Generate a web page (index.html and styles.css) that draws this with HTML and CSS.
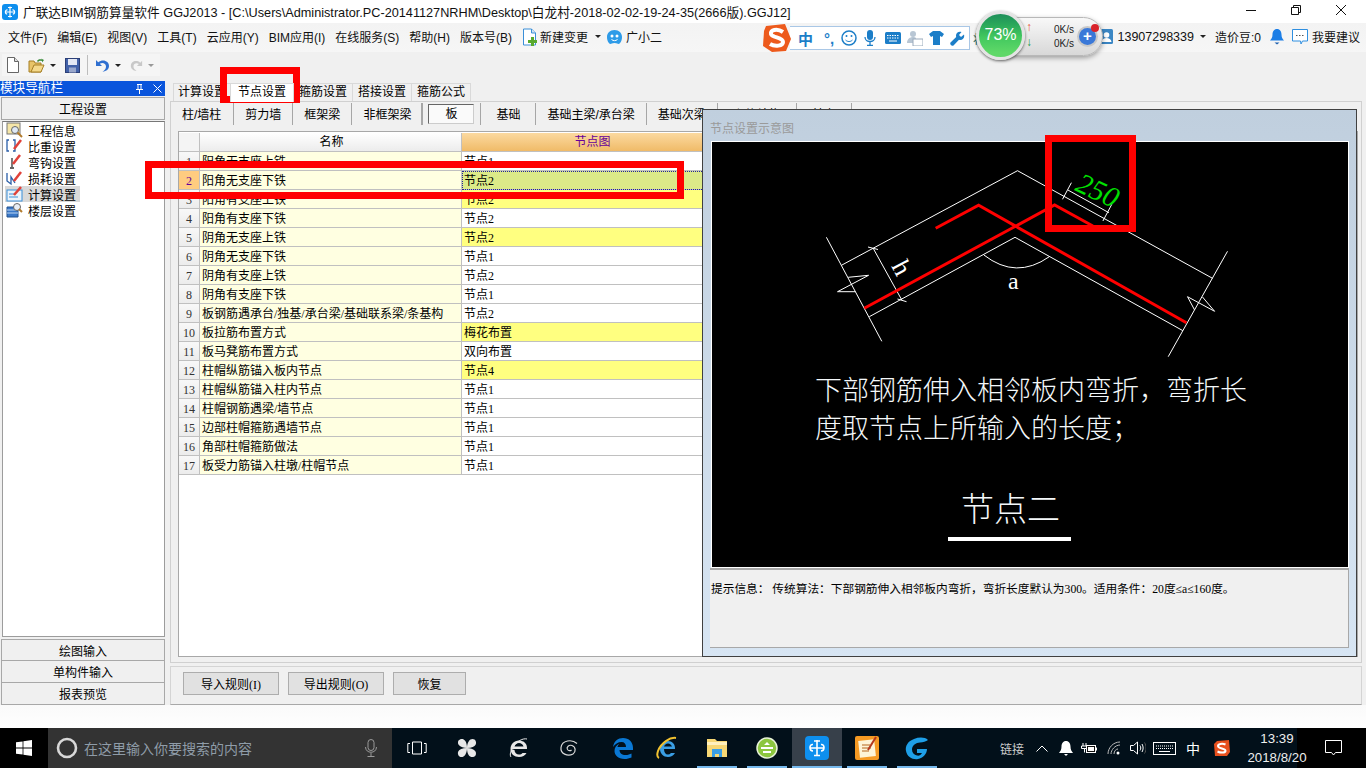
FILE: index.html
```html
<!DOCTYPE html>
<html lang="zh-CN">
<head>
<meta charset="utf-8">
<title>广联达BIM钢筋算量软件 GGJ2013</title>
<link rel="stylesheet" href="styles.css">
</head>
<body>
<div class="app">
  <header class="titlebar">
    <svg class="appicon" width="16" height="16" viewBox="0 0 16 16"><rect width="16" height="16" rx="3" fill="#0e8fee"/><path d="M8 2.500v11M3 8h10M5.500 5.800C3 5.500 2.500 10 5.200 10M10.500 5.800c2.500-.3 3 4.200.3 4.200M6 3.500h4M6 12.500h4" stroke="#fff" stroke-width="1.200" fill="none"/></svg>
    <span class="titletext">广联达BIM钢筋算量软件 GGJ2013 - [C:\Users\Administrator.PC-20141127NRHM\Desktop\白龙村-2018-02-02-19-24-35(2666版).GGJ12]</span>
    <div class="winctl">
      <svg width="10" height="10" viewBox="0 0 10 10"><path d="M0 5.500h10" stroke="#111"/></svg>
      <svg width="10" height="10" viewBox="0 0 10 10"><path d="M.5 2.500h7v7h-7zM2.500 2.500v-2h7v7h-2" stroke="#111" fill="none"/></svg>
      <svg width="10" height="10" viewBox="0 0 10 10"><path d="M0 0l10 10M10 0L0 10" stroke="#111"/></svg>
    </div>
  </header>

  <nav class="menubar">
    <span>文件(F)</span><span>编辑(E)</span><span>视图(V)</span><span>工具(T)</span><span>云应用(Y)</span><span>BIM应用(I)</span><span>在线服务(S)</span><span>帮助(H)</span><span>版本号(B)</span>
    <span class="menuicon">
      <svg width="15" height="18" viewBox="0 0 15 18"><path d="M1.500 1h8l4 4v12h-12z" fill="#fff" stroke="#3a8fd8"/><path d="M9.500 1v4h4" fill="#cfe4f7" stroke="#3a8fd8"/><path d="M9 9v3H6v3h3v3h3v-3h3v-3h-3V9z" fill="#58a92e"/></svg>
      新建变更<i class="caret dark"></i>
    </span>
    <span class="menuicon">
      <svg width="17" height="16" viewBox="0 0 17 16"><path d="M8.500 1C13 1 16 4 16 8c0 4-2 7-3.500 7-1 0-1.500-1-4-1s-3 1-4 1C3 15 1 12 1 8c0-4 3-7 7.500-7z" fill="#2e9be8"/><circle cx="6" cy="7" r="1.500" fill="#fff"/><circle cx="11" cy="7" r="1.500" fill="#fff"/><path d="M5.500 10.500c2 1.500 4 1.500 6 0" stroke="#fff" fill="none"/></svg>
      广小二
    </span>
    <div class="userbar">
      <svg class="usericon" width="13" height="15" viewBox="0 0 13 15"><rect width="13" height="15" rx="1.500" fill="#3a86c4"/><circle cx="6.500" cy="6" r="2.800" fill="#fff"/><path d="M1.500 13c.5-3 2.500-4 5-4s4.500 1 5 4z" fill="#fff"/></svg>
      <span class="phone">13907298339</span><i class="caret dark"></i>
      <span class="beans">造价豆:0</span>
      <svg class="bell" width="14" height="17" viewBox="0 0 14 17"><path d="M7 1c3 0 4.500 2.500 4.500 5.500 0 3 1 4.500 2.500 6H0c1.500-1.500 2.500-3 2.500-6C2.500 3.500 4 1 7 1z" fill="#1c7ee6"/><path d="M4.500 14.500h5L7 16.500z" fill="#1c5fae"/></svg>
      <svg class="chat" width="16" height="16" viewBox="0 0 16 16"><path d="M.5.500h15v11.500h-5l-1.500 3-.5-3H.5z" fill="#fff" stroke="#2f8fe0"/><path d="M4 6.500h1.500M7 6.500h1.500M10 6.500h1.500" stroke="#555"/></svg>
      <span>我要建议</span>
    </div>
  </nav>

  <div class="toolbar">
    <div class="toolgroup">
      <svg width="12" height="16" viewBox="0 0 12 16"><path d="M.5.500h7l4 4v11H.5z" fill="#fff" stroke="#666"/><path d="M7.500.500v4h4" fill="#ddd" stroke="#666"/></svg>
      <svg class="gapl" width="17" height="15" viewBox="0 0 17 15"><path d="M1 3h5l1 2h6v9H1z" fill="#e8c468" stroke="#a57e24"/><path d="M3 14l3-7h10l-3 7z" fill="#f4d98c" stroke="#a57e24"/><path d="M9 3c1-2 3-2 5-1.500L13 .500l3 1.500-2 2.500v-1.500c-2-.5-3 0-4 1z" fill="#3a8a3a"/></svg>
      <i class="caret dark tcaret"></i>
      <svg class="gapl" width="15" height="15" viewBox="0 0 15 15"><rect x=".5" y=".5" width="14" height="14" fill="#4261a8" stroke="#2c3f77"/><rect x="3" y="1" width="9" height="6" fill="#e4e8f4"/><rect x="4" y="9.500" width="7" height="5" fill="#9aa8cc"/></svg>
      <b class="toolsep"></b>
      <svg width="15" height="15" viewBox="0 0 15 15"><path d="M1 2v6h6L4.800 5.800C7.500 4 11 5.500 11 8.500c0 2.500-1.500 4-3.500 5C11.500 13.500 14 11 14 8c0-5-6-7.500-10.800-3.800z" fill="#2f6fd0"/></svg>
      <i class="caret dark tcaret"></i>
      <svg class="gapl" width="13" height="15" viewBox="0 0 15 15"><path d="M14 2v6H8l2.200-2.200C7.500 4 4 5.500 4 8.500c0 2.500 1.500 4 3.500 5C3.500 13.500 1 11 1 8c0-5 6-7.500 10.800-3.800z" fill="#c8c8c8"/></svg>
      <i class="caret grey tcaret"></i>
    </div>
  </div>

  <main class="workspace">
    <aside class="navpane">
      <div class="navtitle"><span>模块导航栏</span>
        <svg width="9" height="10" viewBox="0 0 9 10"><path d="M2 .5h5M3 .5v5M6 .5v5M1 5.500h7M4.500 5.500V10" stroke="#fff" fill="none"/></svg>
        <svg class="navclose" width="9" height="9" viewBox="0 0 9 9"><path d="M.5.500l8 8M8.500.500l-8 8" stroke="#fff"/></svg>
      </div>
      <div class="navbtn">工程设置</div>
      <ul class="tree">
        <li><svg width="17" height="16" viewBox="0 0 17 16"><rect x="1" y="1" width="13" height="11" fill="#f5e6a8" stroke="#777"/><circle cx="9" cy="8" r="3.500" fill="#dfe9f5" stroke="#666"/><path d="M11.500 10.500L16 15" stroke="#b27b2e" stroke-width="2"/></svg>工程信息</li>
        <li><svg width="17" height="16" viewBox="0 0 17 16"><path d="M3 2H1v11h2M7 2h2v11H7" stroke="#2a5ea8" fill="none" stroke-width="1.300"/><path d="M8 11l7-9" stroke="#e0413a" stroke-width="2.500"/></svg>比重设置</li>
        <li><svg width="17" height="16" viewBox="0 0 17 16"><path d="M6 4v9M4 14h4" stroke="#333" fill="none" stroke-width="1.300"/><path d="M7 10l7-9" stroke="#e0413a" stroke-width="2.500"/></svg>弯钩设置</li>
        <li><svg width="17" height="16" viewBox="0 0 17 16"><path d="M1 3v8l4 3V7l4 6" stroke="#2a5ea8" fill="none" stroke-width="1.300"/><path d="M8 11l7-9" stroke="#e0413a" stroke-width="2.500"/></svg>损耗设置</li>
        <li class="selected"><svg width="17" height="16" viewBox="0 0 17 16"><rect x="1" y="4" width="15" height="11" fill="#eaf3fb" stroke="#3a8fd8"/><path d="M3 8h6M3 11h9" stroke="#3a8fd8"/><path d="M8 9l7-8" stroke="#e0413a" stroke-width="2.500"/></svg>计算设置</li>
        <li><svg width="17" height="16" viewBox="0 0 17 16"><path d="M1 5h11v10H1z" fill="#3a78c8" stroke="#23528f"/><path d="M1 8h11M1 11h11" stroke="#bcd6f2"/><circle cx="11" cy="5" r="3.500" fill="#e8eef5" stroke="#666"/><path d="M13 7l3 3" stroke="#b27b2e" stroke-width="2"/></svg>楼层设置</li>
      </ul>
      <div class="navbtn small first">绘图输入</div>
      <div class="navbtn small">单构件输入</div>
      <div class="navbtn small">报表预览</div>
    </aside>

    <section class="content">
      <div class="tabs">
        <span class="tab lead">计算设置</span><span class="tab active">节点设置</span><span class="tab">箍筋设置</span><span class="tab">搭接设置</span><span class="tab">箍筋公式</span>
      </div>
      <div class="frame">
        <div class="subtabs">
          <span class="sub lead">柱/墙柱</span><span class="sub">剪力墙</span><span class="sub">框架梁</span><span class="sub">非框架梁</span>
          <span class="sub subbox"><b>板</b></span>
          <span class="sub wide">基础</span><span class="sub">基础主梁/承台梁</span><span class="sub">基础次梁</span><span class="sub wide">砌体结构</span><span class="sub wide">其它</span>
        </div>
        <div class="grid">
          <div class="row head"><span class="num"></span><span class="name">名称</span><span class="val">节点图</span></div>
          <div class="row"><span class="num">1</span><span class="name">阳角无支座上铁</span><span class="val">节点1</span></div>
          <div class="row current"><span class="num">2</span><span class="name">阳角无支座下铁</span><span class="val">节点2</span></div>
          <div class="row"><span class="num">3</span><span class="name">阳角有支座上铁</span><span class="val mark">节点2</span></div>
          <div class="row"><span class="num">4</span><span class="name">阳角有支座下铁</span><span class="val">节点2</span></div>
          <div class="row"><span class="num">5</span><span class="name">阴角无支座上铁</span><span class="val mark">节点2</span></div>
          <div class="row"><span class="num">6</span><span class="name">阴角无支座下铁</span><span class="val">节点1</span></div>
          <div class="row"><span class="num">7</span><span class="name">阴角有支座上铁</span><span class="val">节点2</span></div>
          <div class="row"><span class="num">8</span><span class="name">阴角有支座下铁</span><span class="val">节点1</span></div>
          <div class="row"><span class="num">9</span><span class="name">板钢筋遇承台/独基/承台梁/基础联系梁/条基构</span><span class="val">节点2</span></div>
          <div class="row"><span class="num">10</span><span class="name">板拉筋布置方式</span><span class="val mark">梅花布置</span></div>
          <div class="row"><span class="num">11</span><span class="name">板马凳筋布置方式</span><span class="val">双向布置</span></div>
          <div class="row"><span class="num">12</span><span class="name">柱帽纵筋锚入板内节点</span><span class="val mark">节点4</span></div>
          <div class="row"><span class="num">13</span><span class="name">柱帽纵筋锚入柱内节点</span><span class="val">节点1</span></div>
          <div class="row"><span class="num">14</span><span class="name">柱帽钢筋遇梁/墙节点</span><span class="val">节点1</span></div>
          <div class="row"><span class="num">15</span><span class="name">边部柱帽箍筋遇墙节点</span><span class="val">节点1</span></div>
          <div class="row"><span class="num">16</span><span class="name">角部柱帽箍筋做法</span><span class="val">节点1</span></div>
          <div class="row"><span class="num">17</span><span class="name">板受力筋锚入柱墩/柱帽节点</span><span class="val">节点1</span></div>
        </div>
      </div>
      <div class="actions">
        <button class="btn">导入规则(I)</button><button class="btn">导出规则(O)</button><button class="btn short">恢复</button>
      </div>
    </section>
  </main>

  <div class="strip"></div>

  <footer class="taskbar">
    <div class="start"><svg width="16" height="16" viewBox="0 0 16 16"><path d="M0 2.300l6.600-.9v6.200H0zM7.400 1.300L16 0v7.600H7.400zM0 8.400h6.600v6.200L0 13.700zM7.400 8.400H16V16l-8.600-1.300z" fill="#fff"/></svg></div>
    <div class="search">
      <svg width="22" height="22" viewBox="0 0 22 22"><circle cx="11" cy="11" r="9" fill="none" stroke="#d8d8d8" stroke-width="2.600"/></svg>
      <span>在这里输入你要搜索的内容</span>
      <svg class="mic" width="12" height="18" viewBox="0 0 12 18"><rect x="3" y=".5" width="6" height="11" rx="3" fill="none" stroke="#9a9a9a"/><path d="M.5 8c0 7 11 7 11 0M6 14v3M2.500 17.500h7" stroke="#9a9a9a" fill="none"/></svg>
    </div>
    <div class="cell"><svg width="20" height="14" viewBox="0 0 20 14"><path d="M5.500 1h9v12h-9zM3 2.500H.8v9H3M17 2.500h2.200v9H17" stroke="#fff" fill="none"/></svg></div>
    <div class="cell"><svg width="22" height="22" viewBox="0 0 22 22"><path d="M11 11C4 11 .5 7 2.500 3.500 5 .5 11 1 11 11zM11 11c0-7 4-10.500 7.500-8.500 3 2.500 2.500 8.500-7.500 8.500zM11 11c7 0 10.500 4 8.500 7.500-2.500 3-8.500 2.500-8.500-7.500zM11 11c0 7-4 10.500-7.500 8.500-3-2.500-2.500-8.500 7.500-8.500z" fill="#e8e8e8"/></svg></div>
    <div class="cell nudge"><svg width="22" height="22" viewBox="0 0 22 22"><path d="M3 12h16c.5-5-3-8.500-8-8.500S2.500 7.500 2.500 12c0 5 4 8 8.500 8 3.500 0 6-1.500 7.500-4h-4c-1 1-2 1.500-3.500 1.500-2.500 0-4.500-2-4.500-4.500zM6.500 9.500c.5-2 2.500-3.500 4.500-3.500s4 1.500 4.500 3.500z" fill="#e8e8e8"/><path d="M19 2c-4-1-10 2-14 8-2.500 4-3.500 8-2 10" stroke="#e8e8e8" fill="none"/></svg></div>
    <div class="cell nudge"><svg width="20" height="20" viewBox="0 0 20 20"><path d="M18 5.500C13 1 3 2 2 9.500c-.8 6 6.500 9.500 12 6.500 3-2 3-7-1-8.500-3-1-6 1.500-4.500 4 1 1.500 3 1.500 4 .5" stroke="#d8d8d8" fill="none" stroke-width="1.200"/></svg></div>
    <div class="cell far"><svg width="22" height="22" viewBox="0 0 22 22"><path d="M1 10C2 4 6 1 11 1c6 0 10 4 10 10v2H7.500c0 3 2.500 5 6 5 2.500 0 4.500-.7 6-1.500v4c-2 .8-4.500 1.500-7 1.500C6 22 2.500 18 2.500 14c0-3 1.500-6 5-7.500-1 1-1.800 2.200-2 3.500h8.500c0-3-1.500-5-4.500-5C6 5 3 7 1 10z" fill="#0a78d4"/></svg></div>
    <div class="cell"><svg width="24" height="24" viewBox="0 0 24 24"><path d="M6 13h14c.5-5-3-8-7-8s-8 3.500-8 8 3.500 8 8 8c3 0 5.500-1.500 7-4h-4c-1 1-2 1.500-3 1.500-2.500 0-4-2-4-5.500zM9 10.500c.5-1.500 2-3 4-3s3.500 1.500 4 3z" fill="#3a9ee4"/><path d="M21 2C15 1 6 7 3 15c-1 3-1 6 1 7" stroke="#f2c230" fill="none" stroke-width="2"/></svg></div>
    <div class="cell open"><svg width="22" height="20" viewBox="0 0 22 20"><path d="M1 1h8l2 2h10v16H1z" fill="#f7d774"/><rect x="1" y="4" width="20" height="3" fill="#fff0bd"/><path d="M6 11h10v8h-3v-3H9v3H6z" fill="#3a9ee4"/></svg></div>
    <div class="cell open"><svg width="22" height="22" viewBox="0 0 22 22"><circle cx="11" cy="11" r="10" fill="#8cc63f" stroke="#e8f2d8" stroke-width="1.500"/><path d="M5 10h12v2H5zM7 14h8v2H7zM11 5l3 3H8z" fill="#fff"/></svg></div>
    <div class="cell active open"><svg width="24" height="24" viewBox="0 0 24 24"><rect width="24" height="24" rx="4" fill="#0e8fee"/><path d="M12 4v16M5 12h14M8 8.500C4 8 4 15 8 15M16 8.500c4-.5 4 6.500 0 6.500M9 5h6M9 19.500h6" stroke="#fff" stroke-width="1.600" fill="none"/></svg></div>
    <div class="cell open"><svg width="24" height="24" viewBox="0 0 24 24"><rect width="24" height="24" rx="2" fill="#f59a23"/><rect x="4" y="4" width="16" height="17" fill="#fdf4d8" transform="rotate(-6 12 12)"/><path d="M7 9h8M7 12h9M7 15h7" stroke="#b5651d"/><path d="M21 1l-8 13" stroke="#b5381d" stroke-width="2"/></svg></div>
    <div class="cell open"><svg width="24" height="24" viewBox="0 0 24 24"><path d="M23 4c-3-3-9-3-14-1C3 5 0 10 1 15c1 6 7 9 12 8 5-1 9-5 9-10H12v4h5c-1 2-3 3-5 2.500-3-.5-5-3-5-6 0-4 4-7 8-7 3 0 6-1 8-2.500z" fill="#1e9fe8"/></svg></div>
    <div class="tray">
      <span class="t-link">链接</span>
      <span class="t-i w24"><svg width="12" height="7" viewBox="0 0 12 7"><path d="M.5 6.500L6 1l5.500 5.500" stroke="#fff" fill="none"/></svg></span>
      <span class="t-i w24"><svg width="14" height="15" viewBox="0 0 14 15"><path d="M7 0c3 0 4.500 2.500 4.500 5.500 0 3 1 4.500 2.500 6.500H0c1.500-2 2.500-3.500 2.500-6.500C2.500 2.500 4 0 7 0zM5 13h4l-2 2z" fill="#fff"/></svg></span>
      <span class="t-i w22"><svg width="16" height="11" viewBox="0 0 16 11"><path d="M2 0v3M5 0v3M.5 3h6v2.500H.5zM3.500 5.500v4" stroke="#fff" fill="none"/><rect x="5.500" y="2.500" width="9" height="7" fill="#111" stroke="#fff"/><rect x="7" y="4" width="6" height="4" fill="#fff"/><path d="M15 4.500h1v3h-1z" fill="#fff"/></svg></span>
      <span class="t-i w28"><svg width="14" height="14" viewBox="0 0 14 14"><path d="M1 13C1 7 6 1 13 1M4 13c0-4 4-9 9-9M7 13c0-3 2-5 4-5" stroke="#bbb" fill="none"/><circle cx="11" cy="12" r="1.500" fill="#fff"/></svg></span>
      <span class="t-i w20"><svg width="16" height="14" viewBox="0 0 16 14"><path d="M.5 4.500h3L7.500 1v12l-4-3.500h-3zM10 4.500c1 1.500 1 3.500 0 5M12 3c1.500 2.500 1.500 5.500 0 8" stroke="#fff" fill="none"/><path d="M14.500 1.500c2 3 2 8 0 11" stroke="#555" fill="none"/></svg></span>
      <span class="t-i w32"><svg width="23" height="13" viewBox="0 0 23 13"><rect x=".5" y=".5" width="22" height="12" fill="none" stroke="#fff"/><path d="M3 4h17M3 6.500h17" stroke="#fff" stroke-dasharray="1 1"/><path d="M6 9.500h11" stroke="#fff"/></svg></span>
      <span class="t-zh">中</span>
      <span class="t-i w32"><svg width="16" height="16" viewBox="0 0 16 16"><path d="M3 1l12-1 1 12-3 4-12 0L0 4z" fill="#e8501e"/><path d="M11.500 4.500C8 3 4 4 4 6c0 3 8 2 7.500 5-.3 2-5 2-8 .5" stroke="#fff" stroke-width="2" fill="none"/></svg></span>
      <div class="clock"><span>13:39</span><span>2018/8/20</span></div>
      <div class="notify"><svg width="17" height="16" viewBox="0 0 17 16"><path d="M.5.500h16v12h-6L8.500 15l-2-2.500h-6z" fill="none" stroke="#fff"/></svg></div>
    </div>
  </footer>

  <!-- floating dialog -->
  <div class="dialog">
    <div class="dlgtitle">节点设置示意图</div>
    <div class="drawing">
      <svg class="plan" width="636" height="425" viewBox="712 142 636 425">
        <g fill="none" stroke="#fff" stroke-width="1">
          <path d="M841.400 265.300L1017.500 170.700 1212.500 278.300"/>
          <path d="M869.300 316.700L1015 237.300 1182.900 330.700"/>
          <path d="M826.400 237.300L881.800 341.300"/>
          <path d="M1227.500 251.300L1168.200 356.700"/>
          <path d="M848.200 277.300L868.600 275.300 837.500 291.700H855.400"/>
          <path d="M1194.600 310L1187.500 296.700 1214.600 311.300 1202.500 297"/>
          <path d="M873.200 248.300L901.800 300M868 247L878 249.500M897.500 299L906.500 301.700"/>
          <path d="M983.900 255Q1016 280 1049.300 256.700"/>
          <path d="M1067.900 190L1108.900 212.700M1071.400 182.700L1062.500 199.300M1111.800 204.300L1102.900 221"/>
        </g>
        <g fill="none" stroke="#f00" stroke-width="3">
          <path d="M935.700 228.300L978.600 205.300 1186.400 322.700"/>
          <path d="M864.300 308.300L1054.600 205 1092.900 226"/>
        </g>
        <text class="dim green" transform="translate(1074 190) rotate(25)">250</text>
        <text class="dim h" transform="translate(891 266) rotate(62)">h</text>
        <text class="dim" x="1008" y="289">a</text>
      </svg>
      <p class="note">下部钢筋伸入相邻板内弯折，弯折长<br>度取节点上所输入的长度；</p>
      <p class="nodename">节点二</p>
      <div class="nodeline"></div>
    </div>
    <div class="info">提示信息： 传统算法：下部钢筋伸入相邻板内弯折，弯折长度默认为300。适用条件：20度≤a≤160度。</div>
  </div>

  <!-- floating IME bar -->
  <div class="ime">
    <svg class="ime-s" width="28" height="28" viewBox="0 0 28 28"><path d="M3 2l19-2 6 15-5 12-14 1-9-6 1-15z" fill="#ed5a1c"/><path d="M20 8C14 4 7 6 8 10c1 4 12 3 12 8 0 4-8 5-13 2" stroke="#fff" stroke-width="4" fill="none"/></svg>
    <div class="ime-bar">
      <span class="ime-zh">中</span>
      <span class="ime-p">°,</span>
      <svg width="16" height="16" viewBox="0 0 16 16"><circle cx="8" cy="8" r="7" fill="none" stroke="#1c7ec8" stroke-width="1.500"/><circle cx="5.500" cy="6" r="1" fill="#1c7ec8"/><circle cx="10.500" cy="6" r="1" fill="#1c7ec8"/><path d="M4.500 10c2 2 5 2 7 0" stroke="#1c7ec8" fill="none"/></svg>
      <svg class="ime-mic" width="12" height="16" viewBox="0 0 12 16"><rect x="3" width="6" height="10" rx="3" fill="#1c7ec8"/><path d="M1 7c0 6 10 6 10 0M6 12v3M3 15.500h6" stroke="#1c7ec8" fill="none" stroke-width="1.300"/></svg>
      <svg class="ime-kb" width="16" height="12" viewBox="0 0 16 12"><rect width="16" height="12" rx="1.500" fill="#1c7ec8"/><path d="M2 3.500h12M2 6h12" stroke="#fff" stroke-dasharray="1.500 1"/><path d="M4 9h8" stroke="#fff"/></svg>
      <svg width="16" height="16" viewBox="0 0 16 16"><circle cx="6" cy="4" r="3" fill="#b8c6d4"/><path d="M0 13c0-4 3-6 6-6s3 1 3 2v4z" fill="#b8c6d4"/><rect x="6" y="9" width="10" height="7" fill="#fff" stroke="#9ab"/></svg>
      <svg width="15" height="14" viewBox="0 0 15 14"><path d="M4 0h7l4 3-2 3-2-1v9H4V5L2 6 0 3z" fill="#1c7ec8"/></svg>
      <svg width="15" height="15" viewBox="0 0 15 15"><path d="M14 3.500l-3 2.500-2-2 2.500-3C9 0 6 1.500 6 4.500c0 .7 0 1 .2 1.500L.5 11.500c-1 2 1 4 3 3L9 8.800c3.500 1 6-2 5-5.300z" fill="#1c7ec8"/></svg>
    </div>
    <span class="ime-tail">将</span>
  </div>

  <!-- floating system monitor -->
  <div class="monitor">
    <div class="pill">
      <div class="arrows"><span class="up">↑</span><span class="down">↓</span></div>
      <div class="speeds"><span>0K/s</span><span>0K/s</span></div>
      <div class="plus">+<i></i></div>
    </div>
    <div class="ball">73%</div>
  </div>

  <!-- annotations on top of the screenshot -->
  <div class="redbox rb1"></div>
  <div class="redbox rb2"></div>
  <div class="redbox rb3"></div>
</div>
</body>
</html>
```
FILE: styles.css
```css
* { box-sizing: border-box; }
html, body { margin: 0; padding: 0; }
body {
  width: 1366px;
  height: 768px;
  overflow: hidden;
  background: #f0f0f0;
  color: #000;
  font: 12px "Liberation Sans", "Noto Sans CJK SC", sans-serif;
}
.app { position: relative; width: 1366px; height: 768px; display: flex; flex-direction: column; }
svg { display: block; flex: none; }
ul, p { margin: 0; padding: 0; }

/* title bar */
.titlebar { height: 23px; background: #fff; display: flex; align-items: center; padding-left: 2px; }
.titletext { margin-left: 5px; font-size: 12.700px; color: #111; white-space: nowrap; }
.winctl { margin-left: auto; display: flex; gap: 35px; padding-right: 20px; margin-top: -3px; }

/* menu bar */
.menubar {
  height: 29px;
  padding-bottom: 2px;
  background: linear-gradient(#f3f3f3, #f6f6f6);
  display: flex;
  align-items: center;
  gap: 10px;
  padding-left: 8px;
  color: #111;
  white-space: nowrap;
}
.menuicon { display: flex; align-items: center; gap: 3px; }
.caret { display: inline-block; width: 0; height: 0; border: 3px solid transparent; border-bottom-width: 0; border-top-width: 3px; }
.caret.dark { border-top-color: #222; }
.caret.grey { border-top-color: #999; }
.menuicon .caret { margin-left: 4px; margin-right: -5px; }
.userbar { margin-left: auto; display: flex; align-items: center; padding-right: 6px; }
.usericon { margin-right: 4px; }
.phone { font-size: 12.500px; }
.userbar .caret { margin-left: 6px; }
.beans { margin-left: 9px; font-size: 12px; }
.bell { margin-left: 9px; }
.chat { margin-left: 8px; margin-right: 4px; }

/* tool bar */
.toolbar { height: 26px; padding: 2px 0 0 2px; }
.toolgroup {
  width: 158px;
  height: 22px;
  background: #f5f5f5;
  display: flex;
  align-items: center;
  padding-left: 5px;
}
.gapl { margin-left: 9px; }
.tcaret { margin-left: 5px; }
.toolsep { width: 1px; height: 20px; background: #bdbdbd; margin: 0 7px 0 7px; }

/* workspace */
.workspace { height: 627px; display: flex; }
.navpane { width: 165px; padding-top: 3px; display: flex; flex-direction: column; }
.navtitle {
  height: 15px;
  background: #0a55dc;
  color: #fff;
  font-size: 12.600px;
  line-height: 15px;
  display: flex;
  align-items: center;
}
.navtitle span { width: 135px; }
.navclose { margin-left: 9px; }
.navbtn {
  height: 23px;
  margin-top: 1px;
  margin-left: 1px;
  border: 1px solid #a8a8a8;
  display: flex;
  align-items: center;
  justify-content: center;
  background: #f0f0f0;
}
.navbtn.small { height: 23px; margin-top: -1px; }
.navbtn.small.first { height: 22px; margin-top: 2px; }
.tree {
  flex: 1;
  margin: 1px 0 0 2px;
  border: 1px solid #9c9c9c;
  border-top-color: #777;
  background: #fff;
  list-style: none;
  padding: 0 0 0 2px;
}
.tree li { height: 16px; width: 75px; display: flex; align-items: center; gap: 5px; padding-left: 1px; white-space: nowrap; }
.tree li.selected { background: #d9d9d9; }

.content { width: 1192px; margin-left: 5px; padding-top: 5px; display: flex; flex-direction: column; }
.tabs { height: 18px; display: flex; padding-left: 3px; position: relative; }
.tab { padding: 0 5px; line-height: 17px; background: #f0f0f0; border: 1px solid #d9d9d9; border-bottom: 0; margin-right: -1px; }
.tab.lead { padding: 0 4px; }
.tab.active { background: #fff; padding: 0 7px; height: 19px; z-index: 1; }
.frame {
  height: 562px;
  border: 1px solid #d0d0d0;
  display: flex;
  flex-direction: column;
  background: #f0f0f0;
}
.subtabs { height: 24px; display: flex; align-items: center; padding-left: 0; white-space: nowrap; }
.sub { height: 22px; padding: 0 11px; line-height: 25px; border-right: 1px solid #a6a6a6; }
.sub.lead { padding-right: 12px; }
.sub.wide { padding: 0 15px; }
.subbox { padding: 0 6px 0 6px; display: flex; align-items: center; margin-left: -2px; border-left: 1px solid #a6a6a6; }
.subbox b { font-weight: 400; width: 46px; height: 20px; text-align: center; line-height: 19px; border: 1px solid; border-color: #666 #ccc #ccc #666; background: #fafafa; }

/* grid */
.grid {
  flex: 1;
  margin: 5px 3px 5px 7px;
  border: 1px solid #a8a8a8;
  padding-top: 1px;
  background: #fff;
  font-family: "Liberation Serif", "Noto Sans CJK SC", sans-serif;
  overflow: hidden;
}
.row { display: grid; grid-template-columns: 21px 262px 260px; height: 19px; }
.row span { border-right: 1px solid #c0c0c0; border-bottom: 1px solid #c0c0c0; line-height: 20px; white-space: nowrap; overflow: hidden; }
.num { background: linear-gradient(#f8f8f8, #ececec); text-align: center; color: #333; }
.name { background: #ffffe1; padding-left: 2px; }
.val { background: #fff; padding-left: 2px; }
.val.mark { background: #ffff80; }
.row.head span { text-align: center; line-height: 18px; }
.row.head .num { background: #f4f4f4; }
.row.head .name { background: linear-gradient(#fff, #ececec); }
.row.head .val { background: linear-gradient(#fbd9a0, #f0bb68); color: #660099; }
.row.current .num { background: #ffcc80; color: #660099; }
.row.current .val { background: #dcea88; outline: 1px dotted #22229a; outline-offset: -1px; }

/* bottom buttons */
.actions { height: 39px; margin-top: 3px; border: 1px solid #d4d4d4; border-bottom-color: #a8a8a8; border-top-color: #d4d4d4; padding: 5px 0 0 12px; display: flex; gap: 9px; }
.btn { width: 96px; height: 23px; background: #e1e1e1; border: 1px solid #adadad; padding: 0; font: inherit; font-family: "Liberation Serif", "Noto Sans CJK SC", sans-serif; color: #000; }
.btn.short { width: 73px; }

.strip { height: 23px; background: linear-gradient(#fafafa, #fff); }

/* taskbar */
.taskbar { height: 40px; background: #02101a; display: flex; align-items: stretch; color: #fff; }
.start { width: 48px; background: #000; display: flex; align-items: center; justify-content: center; }
.search { width: 344px; background: #333; display: flex; align-items: center; padding-left: 8px; color: #8f9ca8; font-size: 14px; }
.search span { margin-left: 6px; }
.mic { margin-left: auto; margin-right: 15px; }
.cell { width: 50px; display: flex; align-items: center; justify-content: center; position: relative; }
.cell.nudge { padding-left: 4px; }
.cell.far { padding-left: 12px; }
.cell.open::after { content: ""; position: absolute; left: 5px; right: 5px; bottom: 0; height: 2px; background: #76b9ed; }
.cell.active { background: #37404a; }
.cell.active::after { left: 0; right: 0; }
.tray { margin-left: auto; display: flex; align-items: center; height: 100%; }
.t-link { width: 30px; font-size: 12px; color: #ccc; }
.t-i { display: flex; justify-content: center; }
.w24 { width: 24px; }
.w22 { width: 22px; }
.w28 { width: 28px; }
.w20 { width: 20px; }
.w32 { width: 32px; }
.t-zh { width: 26px; text-align: center; font-size: 14px; }
.clock {
  width: 78px;
  height: 100%;
  display: flex;
  flex-direction: column;
  align-items: center;
  justify-content: center;
  line-height: 19px;
  font-size: 13.300px;
  color: #eee;
  background: linear-gradient(to right, transparent 59px, #000 59px);
}
.notify { width: 50px; height: 100%; background: #000; display: flex; align-items: center; padding-left: 9px; }

/* dialog */
.dialog {
  position: absolute;
  left: 702px;
  top: 109px;
  width: 655px;
  height: 548px;
  border: 1px solid #404040;
  background: linear-gradient(#c0cfde, #d7e5f3);
  display: flex;
  flex-direction: column;
  padding: 0 7px 7px 9px;
}
.dlgtitle { height: 32px; padding-top: 12px; margin-left: -2px; color: #9a9a9a; line-height: 14px; }
.drawing { position: relative; width: 636px; height: 425px; background: #000; color: #f4f8fa; outline: 1px solid #fff; overflow: hidden; font-family: "Liberation Serif", "Noto Sans CJK SC", serif; font-weight: 300; }
.plan { position: absolute; left: 0; top: 0; }
.dim { fill: #fff; font: 24px "Liberation Serif", serif; }
.dim.h { font-size: 26px; }
.dim.green { fill: #00e000; font-size: 29px; font-style: italic; }
.note { padding: 230px 0 0 103px; font-size: 27px; line-height: 38px; white-space: nowrap; }
.nodename { margin-top: 42px; padding-left: 249px; font-size: 33px; line-height: 40px; }
.nodeline { width: 123px; height: 4px; margin: 7px 0 0 236px; background: #fff; }
.info {
  flex: none;
  height: 80px;
  margin-top: 1px;
  margin-left: -2px;
  width: 639px;
  background: #f0f0f0;
  border: 1px solid #a8a8a8;
  border-width: 2px 1px 1px 0;
  padding: 13px 0 0 1px;
  line-height: 14px;
  white-space: nowrap;
  font-family: "Liberation Serif", "Noto Sans CJK SC", serif;
  font-size: 11.700px;
}

/* IME */
.ime { position: absolute; left: 763px; top: 24px; display: flex; align-items: center; }
.ime-s { position: relative; z-index: 1; }
.ime-bar {
  width: 180px;
  height: 24px;
  margin-left: -1px;
  background: #fff;
  border: 1px solid #a9c7e6;
  border-left: 0;
  display: flex;
  align-items: center;
  gap: 6px;
  padding-left: 8px;
  color: #1c7ec8;
}
.ime-zh { font-size: 15px; font-weight: 700; width: 16px; }
.ime-p { font-size: 15px; font-weight: 700; width: 11px; margin-left: 4px; }
.ime-mic { margin-left: 1px; }
.ime-kb { margin-left: 3px; }
.ime-tail { color: #1f6f6a; margin-left: 3px; }

/* monitor */
.monitor { position: absolute; left: 976px; top: 11px; width: 127px; height: 50px; }
.pill {
  position: absolute;
  left: 24px;
  top: 6px;
  width: 103px;
  height: 39px;
  border-radius: 0 20px 20px 0;
  background: linear-gradient(#f8f8f8, #d8d8d8);
  border: 1px solid #b8b8b8;
  box-shadow: 0 2px 5px rgba(0, 0, 0, .35);
  font-size: 10px;
}
.arrows { position: absolute; left: 25px; top: 2px; display: flex; flex-direction: column; font-size: 12px; font-weight: 700; line-height: 15px; }
.up { color: #e8553a; }
.down { color: #239a4c; }
.speeds { position: absolute; left: 53px; top: 5px; display: flex; flex-direction: column; line-height: 14px; color: #222; }
.plus { position: absolute; left: 78px; top: 10px; width: 17px; height: 17px; border-radius: 50%; background: #3a78d8; color: #fff; font: 700 15px/16px "Liberation Sans", sans-serif; text-align: center; box-shadow: 0 0 0 2px #c8c8c8; }
.plus i { position: absolute; right: -3px; top: -4px; width: 8px; height: 8px; border-radius: 50%; background: #d8232a; }
.ball {
  position: absolute;
  left: 0;
  top: 0;
  width: 49px;
  height: 49px;
  border-radius: 50%;
  border: 3px solid #e4e4e4;
  background: linear-gradient(#1e8f5a 0, #2aa85a 25%, #43c95f 55%, #5fd868 90%);
  color: #fff;
  font-size: 16px;
  text-align: center;
  line-height: 41px;
  box-shadow: 0 1px 3px rgba(0, 0, 0, .6);
}

/* annotation rectangles */
.redbox { position: absolute; border: 7px solid #f00; }
.rb1 { left: 220px; top: 67px; width: 80px; height: 36px; }
.rb2 { left: 145px; top: 161px; width: 539px; height: 38px; }
.rb3 { left: 1045px; top: 135px; width: 91px; height: 97px; }
```
